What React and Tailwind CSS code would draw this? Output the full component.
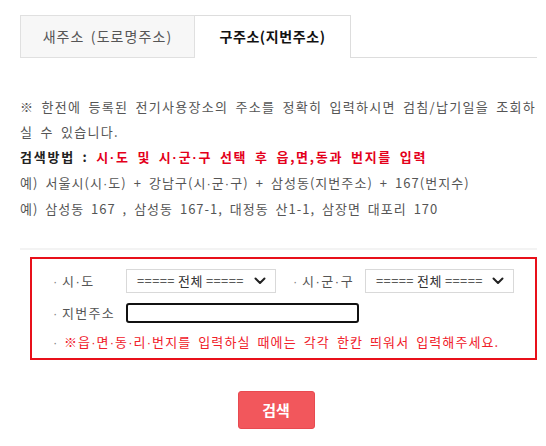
import React from "react";

function T({ children }) {
  const parts = String(children).split("·");
  const out = [];
  parts.forEach((p, i) => {
    if (i > 0) out.push(<span key={"d" + i} className="font-['Liberation_Sans',sans-serif]">·</span>);
    out.push(<React.Fragment key={"t" + i}>{p}</React.Fragment>);
  });
  return <>{out}</>;
}

function Chevron() {
  return (
    <svg width="12" height="8" viewBox="0 0 12 8" className="absolute right-[9px] top-1/2 -translate-y-1/2 pointer-events-none">
      <path d="M1.5 1.5 L6 6 L10.5 1.5" fill="none" stroke="#222" strokeWidth="2" strokeLinecap="round" strokeLinejoin="round" />
    </svg>
  );
}

function FakeSelect({ w }) {
  return (
    <div className={`relative ${w} h-[24px] border border-[#d9d9d9] bg-white flex items-center pl-[10px] text-[13px] text-[#333]`}>
      <span className="tracking-[0.35px]">===== 전체 =====</span>
      <Chevron />
    </div>
  );
}

export default function App() {
  return (
    <div className="w-[546px] h-[446px] bg-white pl-[20px] pr-[9px] pt-[15px] font-['Noto_Sans_CJK_KR',sans-serif] text-[13px] text-[#555]">
      {/* Tabs */}
      <div className="flex h-[43px] border-b border-[#dddddd]">
        <div className="w-[175px] h-[43px] bg-[#f7f7f7] border border-[#e0e0e0] flex items-center justify-center text-[14px] text-[#555] tracking-[1.1px] [word-spacing:2px]">
          새주소 (도로명주소)
        </div>
        <div className="w-[156px] h-[43px] bg-white border border-l-0 border-b-0 border-[#dddddd] flex items-center justify-center text-[14px] font-bold text-[#111] tracking-[0.6px] mb-[-1px] pb-[1px]">
          구주소(지번주소)
        </div>
      </div>

      {/* Description */}
      <div className="mt-[36px] leading-[25px] [word-spacing:3px]">
        <p className="tracking-[1.3px]">※ 한전에 등록된 전기사용장소의 주소를 정확히 입력하시면 검침/납기일을 조회하<br />실 수 있습니다.</p>
        <p className="font-bold text-[#e4001b] tracking-[1.75px]">
          <span className="text-[#222]">검색방법 : </span><T>시·도 및 시·군·구 선택 후 읍,면,동과 번지를 입력</T>
        </p>
        <p className="tracking-[1.05px]"><T>예) 서울시(시·도) + 강남구(시·군·구) + 삼성동(지번주소) + 167(번지수)</T></p>
        <p className="tracking-[1px]">예) 삼성동 167 , 삼성동 167-1, 대정동 산1-1, 삼장면 대포리 170</p>
      </div>

      {/* Search box */}
      <div className="mt-[27px] border-t-2 border-[#f3f3f3] pt-[7px]">
        <div className="ml-[10px] border-2 border-[#e8101a] pt-[10px] pb-[6px] pl-[21px]">
          <div className="flex items-center h-[24px]">
            <span className="w-[9px] text-[#888]"><T>·</T></span>
            <span className="w-[64px] tracking-[1.5px]"><T>시·도</T></span>
            <FakeSelect w="w-[150px]" />
            <span className="ml-[17px] w-[9px] text-[#888]"><T>·</T></span>
            <span className="w-[63px] tracking-[1.5px]"><T>시·군·구</T></span>
            <FakeSelect w="w-[149px]" />
          </div>
          <div className="flex items-center h-[20px] mt-[10px]">
            <span className="w-[9px] text-[#888]"><T>·</T></span>
            <span className="w-[64px] tracking-[1.3px]">지번주소</span>
            <div className="w-[233px] h-[20px] border-2 border-[#111] rounded-[3px] bg-white"></div>
          </div>
          <div className="flex items-center h-[20px] mt-[9px]">
            <span className="w-[11px] text-[#888]"><T>·</T></span>
            <span className="text-[#f0202a] tracking-[1.1px] [word-spacing:3px]"><T>※읍·면·동·리·번지를 입력하실 때에는 각각 한칸 띄워서 입력해주세요.</T></span>
          </div>
        </div>
      </div>

      {/* Button */}
      <div className="flex justify-center mt-[31px] pr-[5px]">
        <button className="w-[77px] h-[38px] bg-[#f2575c] border border-[#e84a50] rounded-[3px] text-white font-bold text-[15px]">
          검색
        </button>
      </div>
    </div>
  );
}
